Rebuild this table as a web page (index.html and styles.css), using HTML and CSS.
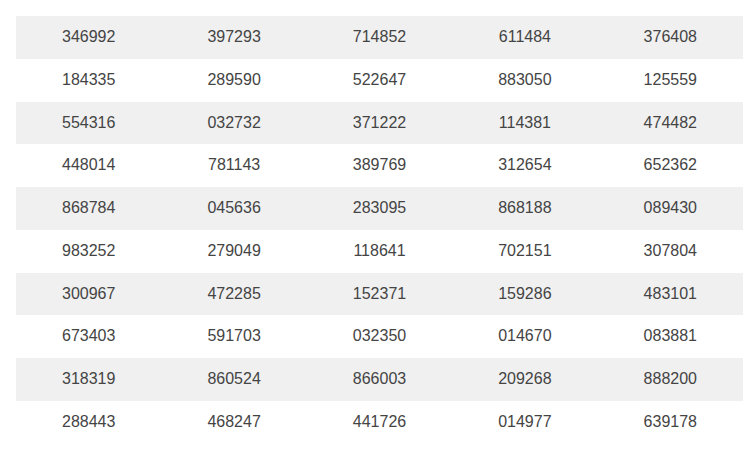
FILE: index.html
```html
<!DOCTYPE html>
<html>
<head>
<meta charset="utf-8">
<link rel="stylesheet" href="styles.css">
</head>
<body>
<table class="grid">
<tbody>
<tr><td>346992</td><td>397293</td><td>714852</td><td>611484</td><td>376408</td></tr>
<tr><td>184335</td><td>289590</td><td>522647</td><td>883050</td><td>125559</td></tr>
<tr><td>554316</td><td>032732</td><td>371222</td><td>114381</td><td>474482</td></tr>
<tr><td>448014</td><td>781143</td><td>389769</td><td>312654</td><td>652362</td></tr>
<tr><td>868784</td><td>045636</td><td>283095</td><td>868188</td><td>089430</td></tr>
<tr><td>983252</td><td>279049</td><td>118641</td><td>702151</td><td>307804</td></tr>
<tr><td>300967</td><td>472285</td><td>152371</td><td>159286</td><td>483101</td></tr>
<tr><td>673403</td><td>591703</td><td>032350</td><td>014670</td><td>083881</td></tr>
<tr><td>318319</td><td>860524</td><td>866003</td><td>209268</td><td>888200</td></tr>
<tr><td>288443</td><td>468247</td><td>441726</td><td>014977</td><td>639178</td></tr>
</tbody>
</table>
</body>
</html>
```
FILE: styles.css
```css
html, body {
  margin: 0;
  padding: 0;
  background: #fff;
}
body {
  padding: 16px;
  font-family: "Liberation Sans", Arial, sans-serif;
  font-size: 16px;
  color: #444;
}
.grid {
  width: 727px;
  border-collapse: collapse;
  table-layout: fixed;
}
.grid td {
  text-align: center;
  padding: 12px 0;
  line-height: 18.75px;
}
.grid tr:nth-child(odd) {
  background: #f0f0f0;
}
```
